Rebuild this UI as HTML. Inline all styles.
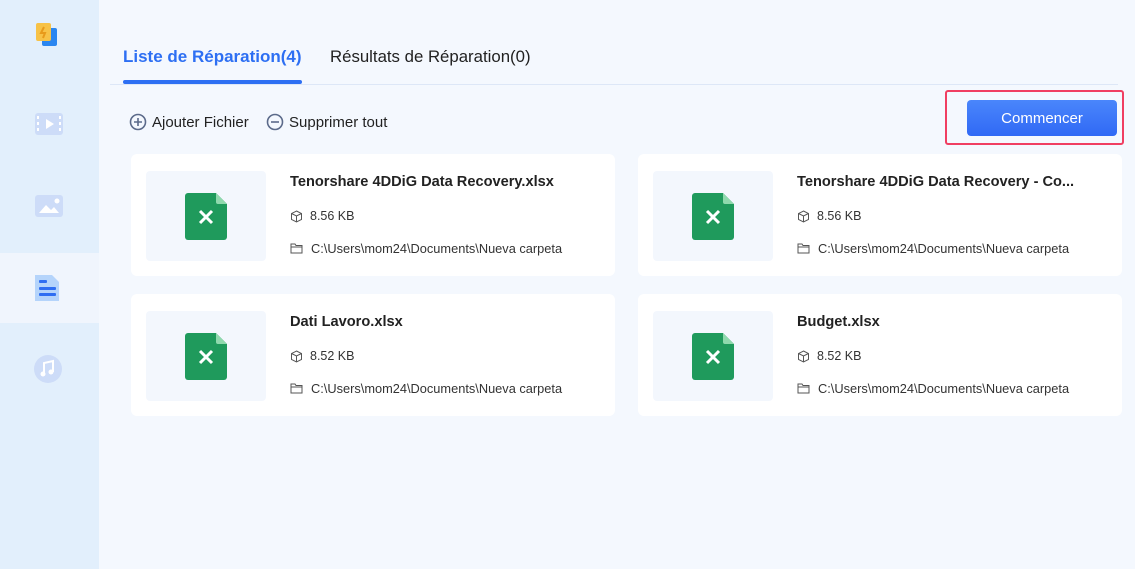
<!DOCTYPE html><html><head><style>
body{margin:0;width:1135px;height:569px;background:#f4f8fe;font-family:"Liberation Sans",sans-serif;position:relative;overflow:hidden}
.sb{position:absolute;left:0;top:0;width:99px;height:569px;background:#e2effc}
.sel{position:absolute;left:0;top:253px;width:99px;height:70px;background:#f0f5fd}
.ic{position:absolute}
.tab{position:absolute;top:47px;font-size:17px}
.card{position:absolute;width:484px;height:122px;background:#fff;border-radius:6px}
.th{position:absolute;left:15px;top:17px;width:120px;height:90px;background:#f3f7fd;border-radius:4px}
.t{position:absolute;left:159px;top:20px;font-size:14.6px;font-weight:bold;color:#222}
.s{position:absolute;left:159px;top:55px;font-size:12.5px;color:#333}
.p{position:absolute;left:159px;top:87px;font-size:12.8px;color:#333}
</style></head><body>
<div class="sb"></div><div class="sel"></div>
<svg class="ic" style="left:35px;top:22px" width="24" height="26"><rect x="7" y="6" width="15" height="18" rx="2" fill="#2a86f0"/><rect x="1" y="1" width="15" height="18" rx="2" fill="#f7c247"/><path d="M9 5l-3 6h4l-2 5" stroke="#e89a1a" stroke-width="2" fill="none"/></svg>
<svg class="ic" style="left:35px;top:112px" width="29" height="24"><rect x="0" y="1" width="28" height="22" rx="3" fill="#cddcf8"/><path d="M11 7v10l8-5z" fill="#fff"/><g fill="#fff"><rect x="2" y="4" width="2" height="3"/><rect x="2" y="10" width="2" height="3"/><rect x="2" y="16" width="2" height="3"/><rect x="24" y="4" width="2" height="3"/><rect x="24" y="10" width="2" height="3"/><rect x="24" y="16" width="2" height="3"/></g></svg>
<svg class="ic" style="left:35px;top:194px" width="29" height="24"><rect x="0" y="1" width="28" height="22" rx="3" fill="#cddcf8"/><path d="M4 19l7-8 5 5 3-3 5 6z" fill="#fff"/><circle cx="22" cy="7" r="2.5" fill="#fff"/></svg>
<svg class="ic" style="left:33px;top:273px" width="28" height="30"><path d="M2 2h17l7 7v19H2z" fill="#b5d4fb"/><g fill="#2f6ef2"><rect x="6" y="7" width="8" height="3" rx="1"/><rect x="6" y="14" width="17" height="3" rx="1"/><rect x="6" y="20" width="17" height="3" rx="1"/></g></svg>
<svg class="ic" style="left:33px;top:354px" width="30" height="30"><circle cx="15" cy="15" r="14" fill="#cddcf8"/><path d="M11 20V9l9-2v11" stroke="#fff" stroke-width="2" fill="none"/><circle cx="10" cy="20" r="2.5" fill="#fff"/><circle cx="18" cy="18" r="2.5" fill="#fff"/></svg>
<div class="tab" style="left:123px;color:#2d6ff3;font-weight:bold">Liste de Réparation(4)</div>
<div class="tab" style="left:330px;color:#222;font-size:16.8px">Résultats de Réparation(0)</div>
<div style="position:absolute;left:110px;top:84px;width:1008px;height:1px;background:#dde7f7"></div>
<div style="position:absolute;left:123px;top:80px;width:179px;height:4px;border-radius:2px;background:#2d6ff3"></div>
<svg class="ic" style="left:129px;top:113px" width="18" height="18"><circle cx="9" cy="9" r="7.5" stroke="#5b6a8a" stroke-width="1.6" fill="none"/><path d="M5 9h8M9 5v8" stroke="#5b6a8a" stroke-width="1.6"/></svg>
<div style="position:absolute;left:152px;top:114px;font-size:15px;color:#222">Ajouter Fichier</div>
<svg class="ic" style="left:266px;top:113px" width="18" height="18"><circle cx="9" cy="9" r="7.5" stroke="#5b6a8a" stroke-width="1.6" fill="none"/><path d="M5 9h8" stroke="#5b6a8a" stroke-width="1.6"/></svg>
<div style="position:absolute;left:289px;top:114px;font-size:15px;color:#222">Supprimer tout</div>
<div style="position:absolute;left:945px;top:90px;width:179px;height:55px;border:2px solid #f03f62;border-radius:3px;box-sizing:border-box"></div>
<div style="position:absolute;left:967px;top:100px;width:150px;height:36px;border-radius:4px;background:linear-gradient(#4a86fb,#3069f5);color:#fff;font-size:15px;text-align:center;line-height:38px">Commencer</div>

<div class="card" style="left:131px;top:154px"><div class="th"></div>
<svg class="ic" style="left:54px;top:39px" width="43" height="47"><path d="M3 0h28l11 11v33a3 3 0 0 1-3 3H3a3 3 0 0 1-3-3V3a3 3 0 0 1 3-3z" fill="#1f9a5c"/><path d="M31 0l11 11h-9a2 2 0 0 1-2-2z" fill="#8fd9ad"/><path d="M15 18l12 12M27 18l-12 12" stroke="#fff" stroke-width="3"/></svg>
<div class="t">Tenorshare 4DDiG Data Recovery.xlsx</div>
<svg class="ic" style="left:159px;top:56px" width="13" height="13"><path d="M6.5 1l5 2.5v6l-5 2.5-5-2.5v-6zM1.5 3.5l5 2.5 5-2.5M6.5 6v6" stroke="#555" fill="none"/></svg>
<div class="s" style="left:179px">8.56 KB</div>
<svg class="ic" style="left:159px;top:88px" width="13" height="12"><path d="M1 2h4l1 1.5h6V11H1zM1 5h11" stroke="#555" fill="none"/></svg>
<div class="p" style="left:180px">C:\Users\mom24\Documents\Nueva carpeta</div></div>

<div class="card" style="left:638px;top:154px"><div class="th"></div>
<svg class="ic" style="left:54px;top:39px" width="43" height="47"><path d="M3 0h28l11 11v33a3 3 0 0 1-3 3H3a3 3 0 0 1-3-3V3a3 3 0 0 1 3-3z" fill="#1f9a5c"/><path d="M31 0l11 11h-9a2 2 0 0 1-2-2z" fill="#8fd9ad"/><path d="M15 18l12 12M27 18l-12 12" stroke="#fff" stroke-width="3"/></svg>
<div class="t">Tenorshare 4DDiG Data Recovery - Co...</div>
<svg class="ic" style="left:159px;top:56px" width="13" height="13"><path d="M6.5 1l5 2.5v6l-5 2.5-5-2.5v-6zM1.5 3.5l5 2.5 5-2.5M6.5 6v6" stroke="#555" fill="none"/></svg>
<div class="s" style="left:179px">8.56 KB</div>
<svg class="ic" style="left:159px;top:88px" width="13" height="12"><path d="M1 2h4l1 1.5h6V11H1zM1 5h11" stroke="#555" fill="none"/></svg>
<div class="p" style="left:180px">C:\Users\mom24\Documents\Nueva carpeta</div></div>

<div class="card" style="left:131px;top:294px"><div class="th"></div>
<svg class="ic" style="left:54px;top:39px" width="43" height="47"><path d="M3 0h28l11 11v33a3 3 0 0 1-3 3H3a3 3 0 0 1-3-3V3a3 3 0 0 1 3-3z" fill="#1f9a5c"/><path d="M31 0l11 11h-9a2 2 0 0 1-2-2z" fill="#8fd9ad"/><path d="M15 18l12 12M27 18l-12 12" stroke="#fff" stroke-width="3"/></svg>
<div class="t">Dati Lavoro.xlsx</div>
<svg class="ic" style="left:159px;top:56px" width="13" height="13"><path d="M6.5 1l5 2.5v6l-5 2.5-5-2.5v-6zM1.5 3.5l5 2.5 5-2.5M6.5 6v6" stroke="#555" fill="none"/></svg>
<div class="s" style="left:179px">8.52 KB</div>
<svg class="ic" style="left:159px;top:88px" width="13" height="12"><path d="M1 2h4l1 1.5h6V11H1zM1 5h11" stroke="#555" fill="none"/></svg>
<div class="p" style="left:180px">C:\Users\mom24\Documents\Nueva carpeta</div></div>

<div class="card" style="left:638px;top:294px"><div class="th"></div>
<svg class="ic" style="left:54px;top:39px" width="43" height="47"><path d="M3 0h28l11 11v33a3 3 0 0 1-3 3H3a3 3 0 0 1-3-3V3a3 3 0 0 1 3-3z" fill="#1f9a5c"/><path d="M31 0l11 11h-9a2 2 0 0 1-2-2z" fill="#8fd9ad"/><path d="M15 18l12 12M27 18l-12 12" stroke="#fff" stroke-width="3"/></svg>
<div class="t">Budget.xlsx</div>
<svg class="ic" style="left:159px;top:56px" width="13" height="13"><path d="M6.5 1l5 2.5v6l-5 2.5-5-2.5v-6zM1.5 3.5l5 2.5 5-2.5M6.5 6v6" stroke="#555" fill="none"/></svg>
<div class="s" style="left:179px">8.52 KB</div>
<svg class="ic" style="left:159px;top:88px" width="13" height="12"><path d="M1 2h4l1 1.5h6V11H1zM1 5h11" stroke="#555" fill="none"/></svg>
<div class="p" style="left:180px">C:\Users\mom24\Documents\Nueva carpeta</div></div>
</body></html>
